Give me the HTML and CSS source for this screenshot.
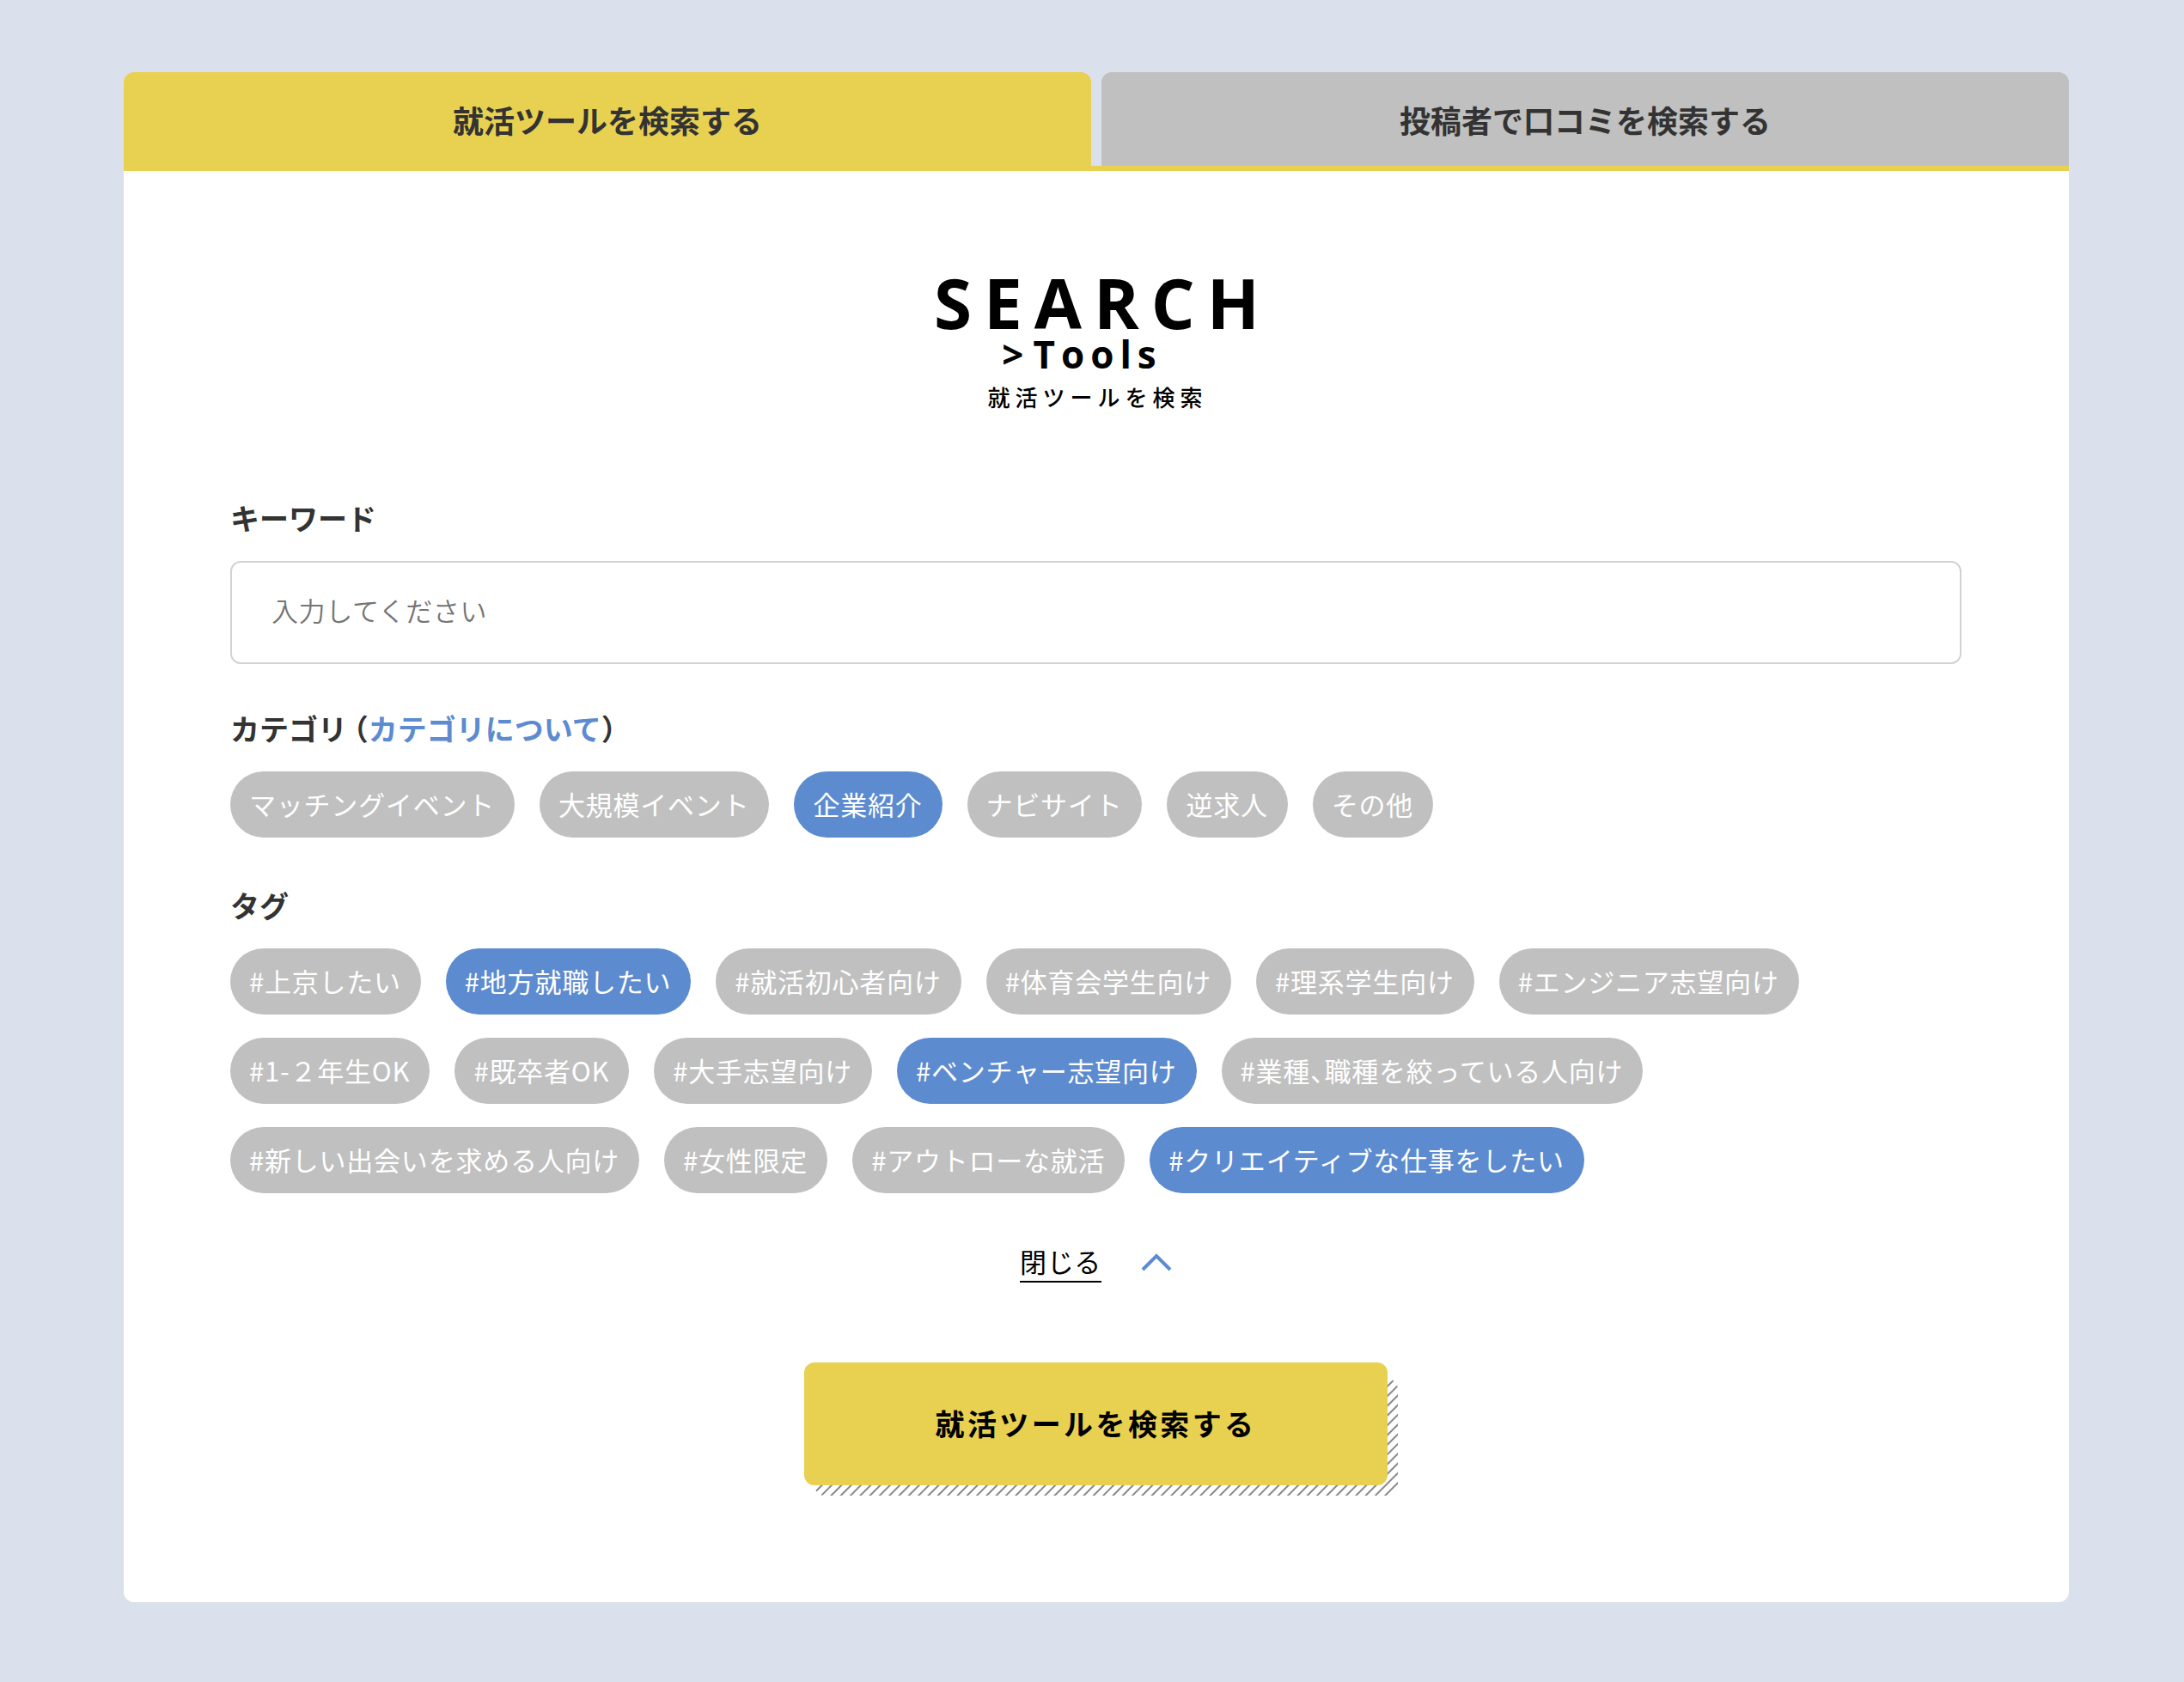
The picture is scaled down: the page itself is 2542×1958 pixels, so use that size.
FILE: index.html
```html
<!DOCTYPE html>
<html lang="ja">
<head>
<meta charset="utf-8">
<meta name="viewport" content="width=device-width, initial-scale=1">
<title>就活ツールを検索する</title>
<link rel="stylesheet" href="styles.css">
</head>
<body>
<main class="search">
  <div class="tabs" role="tablist">
    <button class="tab tab-active" type="button" role="tab" aria-selected="true">就活ツールを検索する</button>
    <button class="tab" type="button" role="tab" aria-selected="false">投稿者で口コミを検索する</button>
  </div>
  <form class="panel">
    <h1 class="heading">
      <span class="heading-main">SEARCH</span>
      <span class="heading-sub"><span class="heading-mark">&gt;</span>Tools</span>
      <span class="heading-ja">就活ツールを検索</span>
    </h1>

    <div class="field field-keyword">
      <label class="label" for="keyword">キーワード</label>
      <input class="input" id="keyword" type="text" placeholder="入力してください">
    </div>

    <div class="field" role="group" aria-labelledby="category-label">
      <div class="label" id="category-label">カテゴリ （<a class="link" href="#category">カテゴリについて</a>）</div>
      <div class="chips">
        <label class="chip"><input type="checkbox">マッチングイベント</label>
        <label class="chip"><input type="checkbox">大規模イベント</label>
        <label class="chip"><input type="checkbox" checked>企業紹介</label>
        <label class="chip"><input type="checkbox">ナビサイト</label>
        <label class="chip"><input type="checkbox">逆求人</label>
        <label class="chip"><input type="checkbox">その他</label>
      </div>
    </div>

    <div class="field" role="group" aria-labelledby="tag-label">
      <div class="label" id="tag-label">タグ</div>
      <div class="chips">
        <label class="chip"><input type="checkbox">#上京したい</label>
        <label class="chip"><input type="checkbox" checked>#地方就職したい</label>
        <label class="chip"><input type="checkbox">#就活初心者向け</label>
        <label class="chip"><input type="checkbox">#体育会学生向け</label>
        <label class="chip"><input type="checkbox">#理系学生向け</label>
        <label class="chip"><input type="checkbox">#エンジニア志望向け</label>
        <label class="chip"><input type="checkbox">#1-２年生OK</label>
        <label class="chip"><input type="checkbox">#既卒者OK</label>
        <label class="chip"><input type="checkbox">#大手志望向け</label>
        <label class="chip"><input type="checkbox" checked>#ベンチャー志望向け</label>
        <label class="chip"><input type="checkbox">#業種、職種を絞っている人向け</label>
        <label class="chip"><input type="checkbox">#新しい出会いを求める人向け</label>
        <label class="chip"><input type="checkbox">#女性限定</label>
        <label class="chip"><input type="checkbox">#アウトローな就活</label>
        <label class="chip"><input type="checkbox" checked>#クリエイティブな仕事をしたい</label>
      </div>
    </div>

    <button class="toggle" type="button" aria-expanded="true">
      <span class="toggle-text">閉じる</span>
      <svg class="toggle-icon" viewBox="0 0 36 24" aria-hidden="true"><path d="M2 21 18 5 34 21"/></svg>
    </button>

    <div class="submit-wrap">
      <button class="submit" type="submit">就活ツールを検索する</button>
    </div>
  </form>
</main>
</body>
</html>
```

FILE: styles.css
```css
:root {
  --yellow: #e8d051;
  --blue: #5c8bd0;
  --gray: #c0c0c0;
  --text: #333;
}

* {
  box-sizing: border-box;
}

body {
  margin: 0;
  background: #dbe1ec;
  color: var(--text);
  font-family: "Noto Sans CJK JP", sans-serif;
  font-size: 31px;
}

button,
input {
  border: 0;
  margin: 0;
  font-family: inherit;
  color: inherit;
}

button {
  cursor: pointer;
}

.search {
  padding: 84px 134px 95px 144px;
}

/* Tabs */
.tabs {
  display: flex;
  gap: 12px;
  border-bottom: 6px solid var(--yellow);
}

.tab {
  flex: 1;
  padding: 30px 0 29px;
  border-radius: 12px 12px 0 0;
  background: var(--gray);
  font-size: 36px;
  font-weight: 700;
  line-height: 50px;
}

.tab-active {
  background: var(--yellow);
}

/* Panel */
.panel {
  display: flex;
  flex-direction: column;
  padding: 112px 125px 136px 124px;
  border-radius: 0 0 12px 12px;
  background: #fff;
}

.heading {
  display: flex;
  flex-direction: column;
  align-items: center;
  margin: 0 0 103px;
  color: #000;
  font-family: "Open Sans", "Noto Sans CJK JP", sans-serif;
  font-weight: 700;
}

.heading-main {
  padding-left: 16px;
  font-size: 80px;
  line-height: 82px;
  letter-spacing: 14px;
}

.heading-sub {
  margin-right: 32px;
  font-size: 44px;
  line-height: 38px;
  letter-spacing: 7px;
}

.heading-mark {
  margin-right: 4px;
}

.heading-ja {
  margin-top: 16px;
  padding-left: 4px;
  font-family: "Noto Sans CJK JP", sans-serif;
  font-size: 26px;
  font-weight: 500;
  line-height: 30px;
  letter-spacing: 6px;
}

/* Fields */
.field {
  margin-bottom: 56px;
}

.field-keyword {
  margin-bottom: 52px;
}

.label {
  display: block;
  margin-bottom: 27px;
  font-size: 34px;
  font-weight: 700;
  font-feature-settings: "halt";
  line-height: 46px;
}

.link {
  color: var(--blue);
  text-decoration: none;
}

.input {
  display: block;
  width: 100%;
  height: 120px;
  padding: 0 46px 8px;
  border: 2px solid #d2d2d2;
  border-radius: 12px;
  background: #fff;
  font-size: 31px;
  letter-spacing: .02em;
}

.input::placeholder {
  color: #757575;
  font-weight: 350;
}

.chips {
  display: flex;
  flex-wrap: wrap;
  gap: 27px 29px;
}

.chip {
  display: flex;
  padding: 16px 23px 17px 22px;
  border-radius: 39px;
  background: var(--gray);
  color: #fff;
  font-feature-settings: "halt";
  line-height: 44px;
  letter-spacing: .025em;
  cursor: pointer;
}

.chip:has(:checked) {
  background: var(--blue);
}

.chip input {
  width: 0;
  height: 0;
  appearance: none;
}

/* Show / hide the tag list */
.toggle {
  display: flex;
  align-items: center;
  align-self: center;
  gap: 46px;
  padding: 0;
  background: none;
  color: #000;
  font-size: 31px;
  line-height: 46px;
  letter-spacing: .02em;
}

.toggle-text {
  border-bottom: 2px solid #000;
}

.toggle-icon {
  width: 36px;
  height: 24px;
  fill: none;
  stroke: var(--blue);
  stroke-width: 4;
}

/* Submit button over a hatched shadow */
.submit-wrap {
  position: relative;
  align-self: center;
  margin-top: 93px;
}

.submit-wrap::before {
  content: "";
  position: absolute;
  inset: 19px -12px -12px 12px;
  border-radius: 12px;
  background: repeating-linear-gradient(-45deg, #fff 0 1px, #888 2px 3px, #fff 4px 8px);
}

.submit {
  position: relative;
  width: 679px;
  padding: 46px 0 47px;
  border-radius: 12px;
  background: var(--yellow);
  color: #000;
  font-size: 34px;
  font-weight: 700;
  line-height: 50px;
  letter-spacing: .1em;
}
```
